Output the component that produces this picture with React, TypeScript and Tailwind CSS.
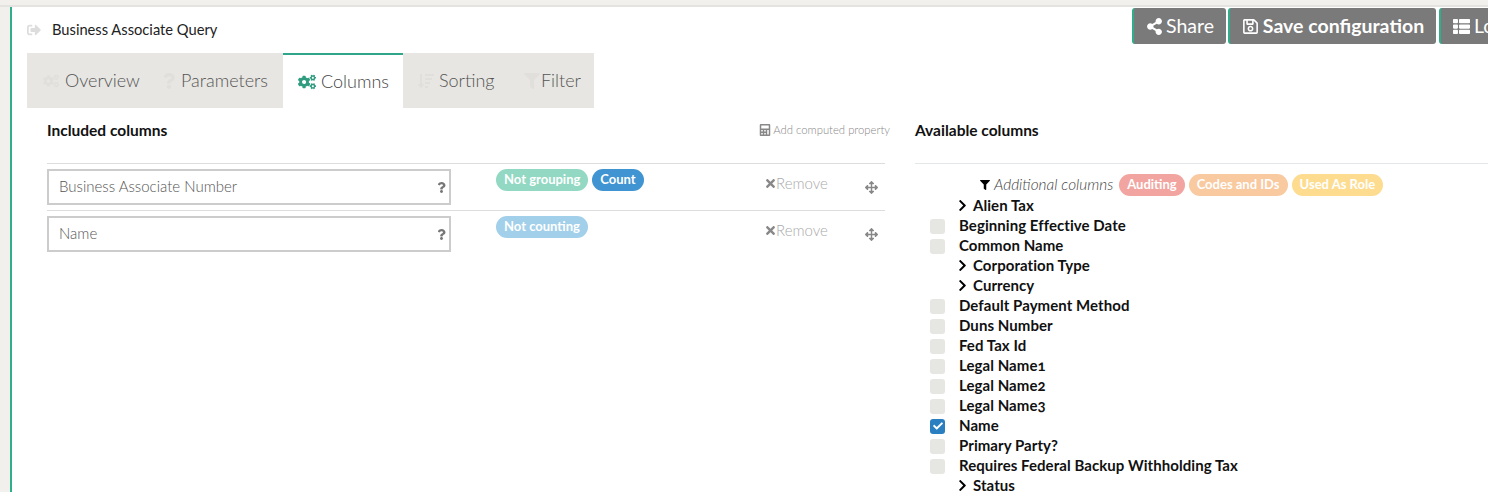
import { FaArrowsAlt, FaCalculator, FaCheck, FaChevronRight, FaCogs, FaFilter, FaQuestion, FaRegSave, FaShareAlt, FaSignOutAlt, FaSortAmountDown, FaThList, FaTimes } from 'react-icons/fa';

const font = 'font-["Lato","Open_Sans",sans-serif]';

const tabs = [
  { label: 'Overview', icon: <FaCogs />, left: 'pl-[16px]', w: 'w-[128px]', gap: 'gap-[6px]' },
  { label: 'Parameters', icon: <FaQuestion />, left: 'pl-[6px]', w: 'w-[128px]', gap: 'gap-[4px]' },
  { label: 'Columns', icon: <FaCogs />, left: 'pl-[15px]', w: 'w-[120px]', gap: 'gap-[5px]', active: true },
  { label: 'Sorting', icon: <FaSortAmountDown />, left: 'pl-[15px]', w: 'w-[103px]', gap: 'gap-[5px]' },
  { label: 'Filter', icon: <FaFilter />, left: 'pl-[18px]', w: 'w-[88px]', gap: 'gap-[1px]' },
];

const fields = [
  { type: 'parent', label: 'Alien Tax' },
  { type: 'check', label: 'Beginning Effective Date' },
  { type: 'check', label: 'Common Name' },
  { type: 'parent', label: 'Corporation Type' },
  { type: 'parent', label: 'Currency' },
  { type: 'check', label: 'Default Payment Method' },
  { type: 'check', label: 'Duns Number' },
  { type: 'check', label: 'Fed Tax Id' },
  { type: 'check', label: 'Legal Name1' },
  { type: 'check', label: 'Legal Name2' },
  { type: 'check', label: 'Legal Name3' },
  { type: 'checked', label: 'Name' },
  { type: 'check', label: 'Primary Party?' },
  { type: 'check', label: 'Requires Federal Backup Withholding Tax' },
  { type: 'parent', label: 'Status' },
];

function Badge({ label, color }: { label: string; color: string }) {
  return (
    <span className={`flex h-[22px] items-center rounded-[11px] px-[8px] text-[13px] font-bold text-white ${color}`}>
      {label}
    </span>
  );
}

function ColumnRow({ name, badges }: { name: string; badges: { label: string; color: string }[] }) {
  return (
    <div className="flex h-[47px] border-t border-[#dddddd] pt-[5px]">
      <div className="flex h-[36px] w-[404px] items-center justify-between border-2 border-[#cccccc] pb-[2px] pl-[10px] pr-[2px] text-[15px] font-light text-[#555555]">
        <span>{name}</span>
        <FaQuestion className="mt-[2px] text-[11px] text-[#777777]" />
      </div>
      <div className="ml-[45px] flex w-[269px] gap-[4px]">
        {badges.map((b) => (
          <Badge key={b.label} label={b.label} color={b.color} />
        ))}
      </div>
      <div className="flex h-[28px] w-[100px] items-center text-[15px] font-light text-[#aaaaaa]">
        <FaTimes className="-ml-[1px] mr-[-1px] text-[13px] text-[#888888]" />
        <span>Remove</span>
      </div>
      <FaArrowsAlt className="mt-[12px] text-[13px] text-[#888888]" />
    </div>
  );
}

function FieldRow({ type, label }: { type: string; label: string }) {
  return (
    <div className="flex h-[20px] items-center text-[15px] font-bold tracking-[0.06px] text-[#111111]">
      <div className="flex w-[44px] pl-[15px] pt-[2px]">
        {type === 'check' && <span className="h-[15px] w-[15px] rounded-[3px] bg-[#e6e6e3]" />}
        {type === 'checked' && (
          <span className="flex h-[15px] w-[15px] items-center justify-center rounded-[3px] bg-[#2a7fc1] text-[10px] text-white">
            <FaCheck />
          </span>
        )}
      </div>
      {type === 'parent' && <FaChevronRight className="-ml-[3px] mr-[4px] text-[13px] text-black" />}
      <span className="oldstyle-nums">{label}</span>
    </div>
  );
}

export default function App() {
  return (
    <div className={`h-[492px] w-[1488px] overflow-hidden bg-[#f1f0ed] ${font}`}>
      <div className="h-[7px] border-b-2 border-[#e4e3df]" />
      <div className="ml-[10px] h-[485px] border-l-2 border-[#2fae8b] bg-white">
        <div className="flex h-[46px] justify-between">
          <div className="flex items-center pb-[2px] pl-[15px] pt-[1px] text-[14.7px] text-[#222222]">
            <FaSignOutAlt className="mr-[11px] text-[14px] text-[#dddddd]" />
            <span>Business Associate Query</span>
          </div>
          <div className="mr-[-56px] flex gap-[2px] pt-[1px] text-[19.5px] text-white">
            <button className="flex h-[36px] w-[94px] items-center justify-center gap-[3px] rounded-[3px] border-l-2 border-[#2fae8b] bg-[#7a7a7a]">
              <FaShareAlt className="text-[17px]" />
              <span>Share</span>
            </button>
            <button className="flex h-[36px] w-[208px] items-center justify-center gap-[4px] rounded-[3px] border-l-2 border-[#2fae8b] bg-[#7a7a7a]">
              <FaRegSave className="text-[17px]" />
              <span className="font-bold">Save configuration</span>
            </button>
            <button className="ml-[1px] flex h-[36px] w-[105px] items-center gap-[4px] rounded-[3px] border-l-2 border-[#2fae8b] bg-[#7a7a7a] pl-[12px]">
              <FaThList className="text-[17px]" />
              <span>Load</span>
            </button>
          </div>
        </div>

        <div className="ml-[15px] flex h-[55px] w-[567px] bg-[#e7e6e2]">
          {tabs.map((t) => (
            <div
              key={t.label}
              className={`flex items-center text-[18px] font-light ${t.left} ${t.w} ${t.gap} ${t.active ? 'border-t-2 border-[#2fa58a] bg-white text-[#444444]' : 'text-[#555555]'}`}
            >
              <span className={t.active ? 'text-[18px] text-[#2f9c80]' : 'text-[16px] text-[#e0dfdb]'}>{t.icon}</span>
              <span>{t.label}</span>
            </div>
          ))}
        </div>

        <div className="ml-[35px] flex gap-[30px]">
          <div className="w-[838px]">
            <div className="flex h-[55px] items-start justify-between pt-[11px]">
              <h2 className="text-[15.5px] font-bold text-[#111111]">Included columns</h2>
              <div className="mr-[-5px] mt-[3px] flex items-center gap-[2px] text-[11.3px] font-light text-[#888888]">
                <FaCalculator className="text-[12px]" />
                <span>Add computed property</span>
              </div>
            </div>
            <ColumnRow
              name="Business Associate Number"
              badges={[
                { label: 'Not grouping', color: 'bg-[#92d8c3]' },
                { label: 'Count', color: 'bg-[#3f94d1]' },
              ]}
            />
            <ColumnRow name="Name" badges={[{ label: 'Not counting', color: 'bg-[#a2cfea]' }]} />
          </div>

          <div className="flex-1">
            <div className="flex h-[55px] items-start pt-[11px]">
              <h2 className="text-[15.5px] font-bold text-[#111111]">Available columns</h2>
            </div>
            <div className="border-t border-[#e3e7e8] pt-[10px]">
              <div className="flex h-[21px] items-center pl-[65px]">
                <FaFilter className="mr-[4px] text-[10px] text-black" />
                <span className="mr-[6px] text-[15.4px] font-light italic text-[#444444]">Additional columns</span>
                <div className="flex gap-[4px]">
                  <Badge label="Auditing" color="bg-[#f2a5a0]" />
                  <Badge label="Codes and IDs" color="bg-[#f9c9a0]" />
                  <Badge label="Used As Role" color="bg-[#fddc90]" />
                </div>
              </div>
              {fields.map((f) => (
                <FieldRow key={f.label} type={f.type} label={f.label} />
              ))}
            </div>
          </div>
        </div>
      </div>
    </div>
  );
}
